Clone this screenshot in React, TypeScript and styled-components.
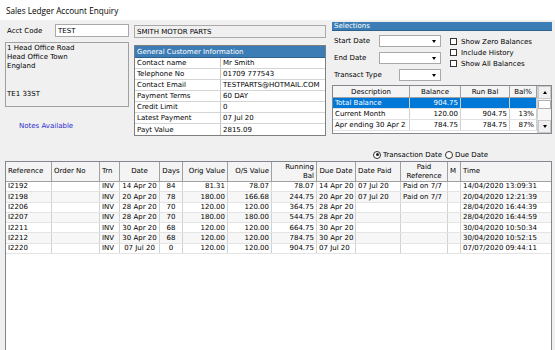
import React from "react";
import styled, { createGlobalStyle } from "styled-components";

const GlobalStyle = createGlobalStyle`
  html, body {
    margin: 0;
    padding: 0;
    overflow: hidden;
    background: #f0f0f0;
  }
  body {
    font-family: Tahoma, "DejaVu Sans", sans-serif;
    font-size: 7px;
    color: #000;
  }
`;

// data
const customerInfo = [
  ["Contact name", "Mr Smith"],
  ["Telephone No", "01709 777543"],
  ["Contact Email", "TESTPARTS@HOTMAIL.COM"],
  ["Payment Terms", "60 DAY"],
  ["Credit Limit", "0"],
  ["Latest Payment", "07 Jul 20"],
  ["Payt Value", "2815.09"],
];

const balances = [
  { desc: "Total Balance", bal: "904.75", run: "", pct: "", selected: true },
  { desc: "Current Month", bal: "120.00", run: "904.75", pct: "13%" },
  { desc: "Apr ending 30 Apr 2", bal: "784.75", run: "784.75", pct: "87%" },
];

type Align = "left" | "center" | "right";

const columns: { title: string; width: number; head: Align; body: Align }[] = [
  { title: "Reference", width: 46, head: "left", body: "left" },
  { title: "Order No", width: 48, head: "left", body: "left" },
  { title: "Trn", width: 20, head: "left", body: "left" },
  { title: "Date", width: 40, head: "center", body: "center" },
  { title: "Days", width: 23, head: "center", body: "center" },
  { title: "Orig Value", width: 45, head: "right", body: "right" },
  { title: "O/S Value", width: 44, head: "right", body: "right" },
  { title: "Running\nBal", width: 45, head: "right", body: "right" },
  { title: "Due Date", width: 39, head: "center", body: "left" },
  { title: "Date Paid", width: 45, head: "left", body: "left" },
  { title: "Paid\nReference", width: 47, head: "center", body: "left" },
  { title: "M", width: 13, head: "left", body: "left" },
  { title: "Time", width: 90, head: "left", body: "left" },
];

const transactions = [
  ["I2192", "", "INV", "14 Apr 20", "84", "81.31", "78.07", "78.07", "14 Apr 20", "07 Jul 20", "Paid on 7/7", "", "14/04/2020 13:09:31"],
  ["I2198", "", "INV", "20 Apr 20", "78", "180.00", "166.68", "244.75", "20 Apr 20", "07 Jul 20", "Paid on 7/7", "", "20/04/2020 12:21:39"],
  ["I2206", "", "INV", "28 Apr 20", "70", "120.00", "120.00", "364.75", "28 Apr 20", "", "", "", "28/04/2020 16:44:39"],
  ["I2207", "", "INV", "28 Apr 20", "70", "180.00", "180.00", "544.75", "28 Apr 20", "", "", "", "28/04/2020 16:44:59"],
  ["I2211", "", "INV", "30 Apr 20", "68", "120.00", "120.00", "664.75", "30 Apr 20", "", "", "", "30/04/2020 10:50:34"],
  ["I2212", "", "INV", "30 Apr 20", "68", "120.00", "120.00", "784.75", "30 Apr 20", "", "", "", "30/04/2020 10:52:15"],
  ["I2220", "", "INV", "07 Jul 20", "0", "120.00", "120.00", "904.75", "07 Jul 20", "", "", "", "07/07/2020 09:44:11"],
];

const gridTemplate = columns.map((c) => `${c.width}px`).join(" ");

// styles
const Window = styled.div`
  width: 555px;
  height: 350px;
  display: flex;
  flex-direction: column;
  background: #f0f0f0;
`;

const TitleBar = styled.div`
  height: 20px;
  flex: none;
  display: flex;
  align-items: center;
  padding-left: 6px;
  background: #fff;
  font-family: "Open Sans", "DejaVu Sans", sans-serif;
  font-size: 8.2px;
`;

const Body = styled.div`
  flex: 1;
  display: flex;
  flex-direction: column;
  padding: 0 3px 0 5px;
  min-height: 0;
`;

const TopArea = styled.div`
  height: 128px;
  flex: none;
  display: flex;
`;

const LeftCol = styled.div`
  width: 124px;
  padding-top: 4px;
  display: flex;
  flex-direction: column;
`;

const MidCol = styled.div`
  width: 192px;
  margin-left: 5px;
  padding-top: 5px;
  display: flex;
  flex-direction: column;
`;

const RightCol = styled.div`
  width: 220px;
  margin-left: 6px;
  padding-top: 2px;
  display: flex;
  flex-direction: column;
`;

const AcctRow = styled.div`
  height: 13px;
  display: flex;
  align-items: center;
`;

const Label = styled.span<{ $w?: number }>`
  width: ${(p) => (p.$w ? `${p.$w}px` : "auto")};
  padding-left: 2px;
  box-sizing: border-box;
  white-space: nowrap;
`;

const TextBox = styled.div<{ $disabled?: boolean }>`
  height: 13px;
  flex: 1;
  box-sizing: border-box;
  border: 1px solid #a9a9a9;
  background: ${(p) => (p.$disabled ? "#f0f0f0" : "#fff")};
  padding-left: 2px;
  display: flex;
  align-items: center;
  white-space: nowrap;
`;

const AddressBox = styled.div`
  margin-top: 5px;
  height: 65px;
  box-sizing: border-box;
  border: 1px solid #a0a0a0;
  background: #f0f0f0;
  padding: 1px 1px;
  line-height: 9.2px;
  white-space: pre;
`;

const Notes = styled.div`
  margin-top: 15px;
  padding-left: 14px;
  line-height: 9px;
  color: #2b2bd0;
`;

const Panel = styled.div`
  margin-top: 7px;
  border: 1px solid #7f7f7f;
  background: #fff;
`;

const PanelHeader = styled.div<{ $h: number }>`
  height: ${(p) => p.$h}px;
  display: flex;
  align-items: center;
  padding-left: 2px;
  background: #3d7db5;
  color: #fff;
  border-bottom: 1px solid #2c6190;
  box-sizing: border-box;
`;

const InfoRow = styled.div`
  height: 11px;
  display: grid;
  grid-template-columns: 85px 1fr;
  border-bottom: 1px solid #d4d4d4;
  box-sizing: border-box;

  &:last-child {
    border-bottom: none;
  }
`;

const InfoCell = styled.div`
  display: flex;
  align-items: center;
  padding-left: 2px;
  white-space: nowrap;
  overflow: hidden;
  & + & {
    border-left: 1px solid #c4c4c4;
  }
`;

const SelectionsBody = styled.div`
  height: 52px;
  display: flex;
`;

const Fields = styled.div`
  width: 109px;
  padding-top: 4px;
  display: flex;
  flex-direction: column;
  gap: 5px;
`;

const FieldRow = styled.div`
  height: 12px;
  display: flex;
  align-items: center;
  justify-content: space-between;
`;

const Dropdown = styled.div<{ $w: number }>`
  width: ${(p) => p.$w}px;
  height: 12px;
  box-sizing: border-box;
  border: 1px solid #a9a9a9;
  background: #fff;
  display: flex;
  align-items: center;
  justify-content: flex-end;
  padding-right: 4px;
`;

const Arrow = styled.span<{ $up?: boolean }>`
  width: 0;
  height: 0;
  border-left: 2px solid transparent;
  border-right: 2px solid transparent;
  ${(p) => (p.$up ? "border-bottom: 3px solid #000;" : "border-top: 3px solid #000;")}
`;

const Checks = styled.div`
  margin-left: 9px;
  padding-top: 5px;
  display: flex;
  flex-direction: column;
`;

const CheckRow = styled.label`
  height: 11px;
  display: flex;
  align-items: center;
  gap: 4px;
  white-space: nowrap;
`;

const CheckBox = styled.span`
  width: 7px;
  height: 7px;
  box-sizing: border-box;
  border: 1px solid #333;
  background: #fff;
`;

const BalanceFrame = styled.div`
  margin-top: 2px;
  height: 49px;
  display: flex;
  border: 1px solid #828790;
  background: #fff;
  box-sizing: border-box;
`;

const BalTable = styled.div`
  flex: 1;
  display: flex;
  flex-direction: column;
`;

const BalRow = styled.div<{ $head?: boolean; $selected?: boolean }>`
  height: ${(p) => (p.$head ? 12 : 11)}px;
  display: grid;
  grid-template-columns: 77px 51px 49px 27px;
  box-sizing: border-box;
  border-bottom: 1px solid ${(p) => (p.$head ? "#a0a0a0" : "#e2e2e2")};
  background: ${(p) => (p.$head ? "#f4f4f4" : p.$selected ? "#0078d7" : "#fff")};
  color: ${(p) => (p.$selected ? "#fff" : "#000")};
`;

const BalCell = styled.div<{ $align: Align; $head?: boolean }>`
  display: flex;
  align-items: center;
  justify-content: ${(p) =>
    p.$align === "right" ? "flex-end" : p.$align === "center" ? "center" : "flex-start"};
  padding: 0 2px;
  white-space: nowrap;
  overflow: hidden;
  border-right: 1px solid ${(p) => (p.$head ? "#a0a0a0" : "#d0d0d0")};
`;

const ScrollBar = styled.div`
  width: 14px;
  display: flex;
  flex-direction: column;
  border-left: 1px solid #d0d0d0;
  background: #f7f7f7;
`;

const ScrollButton = styled.div`
  height: 11px;
  display: flex;
  align-items: center;
  justify-content: center;
  background: #f0f0f0;
  border: 1px solid #c8c8c8;
`;

const ScrollThumb = styled.div`
  height: 7px;
  margin: 1px 0 0;
  background: #fff;
  border: 1px solid #b0b0b0;
`;

const ScrollTrack = styled.div`
  flex: 1;
`;

const RadioRow = styled.div`
  height: 13px;
  flex: none;
  display: flex;
  align-items: center;
  gap: 3px;
  padding-left: 368px;
`;

const RadioItem = styled.label`
  display: flex;
  align-items: center;
  gap: 2px;
  white-space: nowrap;
`;

const RadioCircle = styled.span<{ $checked?: boolean }>`
  width: 8px;
  height: 8px;
  box-sizing: border-box;
  border: 1px solid #333;
  border-radius: 50%;
  background: #fff;
  display: flex;
  align-items: center;
  justify-content: center;

  &::after {
    content: "";
    width: 3px;
    height: 3px;
    border-radius: 50%;
    background: ${(p) => (p.$checked ? "#222" : "transparent")};
  }
`;

const GridFrame = styled.div`
  width: 547px;
  height: 200px;
  flex: none;
  box-sizing: border-box;
  border: 1px solid #828790;
  background: #fff;
`;

const GridRow = styled.div<{ $head?: boolean; $alt?: boolean }>`
  height: ${(p) => (p.$head ? "20px" : "10.3px")};
  display: grid;
  grid-template-columns: ${gridTemplate};
  box-sizing: border-box;
  border-bottom: 1px solid ${(p) => (p.$head ? "#a0a0a0" : "#e4e4e4")};
  background: ${(p) => (p.$head ? "#f4f4f4" : p.$alt ? "#f7f7f7" : "#fff")};
`;

const GridCell = styled.div<{ $align: Align; $head?: boolean }>`
  display: flex;
  align-items: center;
  justify-content: ${(p) =>
    p.$align === "right" ? "flex-end" : p.$align === "center" ? "center" : "flex-start"};
  text-align: ${(p) => p.$align};
  padding: 0 2px;
  white-space: pre;
  overflow: hidden;
  line-height: 8.5px;
  border-right: 1px solid ${(p) => (p.$head ? "#a0a0a0" : "#d2d2d2")};

  &:last-child {
    border-right: none;
  }
`;

// markup
const App = () => {
  return (
    <>
      <GlobalStyle />
      <Window>
        <TitleBar>Sales Ledger Account Enquiry</TitleBar>
        <Body>
          <TopArea>
            <LeftCol>
              <AcctRow>
                <Label $w={50}>Acct Code</Label>
                <TextBox>TEST</TextBox>
              </AcctRow>
              <AddressBox>
                {"1 Head Office Road\nHead Office Town\nEngland\n\n\nTE1 33ST"}
              </AddressBox>
              <Notes>Notes Available</Notes>
            </LeftCol>

            <MidCol>
              <AcctRow>
                <TextBox $disabled>SMITH MOTOR PARTS</TextBox>
              </AcctRow>
              <Panel>
                <PanelHeader $h={12}>General Customer Information</PanelHeader>
                {customerInfo.map(([k, v]) => (
                  <InfoRow key={k}>
                    <InfoCell>{k}</InfoCell>
                    <InfoCell>{v}</InfoCell>
                  </InfoRow>
                ))}
              </Panel>
            </MidCol>

            <RightCol>
              <PanelHeader $h={9}>Selections</PanelHeader>
              <SelectionsBody>
                <Fields>
                  <FieldRow>
                    <Label>Start Date</Label>
                    <Dropdown $w={62}>
                      <Arrow />
                    </Dropdown>
                  </FieldRow>
                  <FieldRow>
                    <Label>End Date</Label>
                    <Dropdown $w={62}>
                      <Arrow />
                    </Dropdown>
                  </FieldRow>
                  <FieldRow>
                    <Label>Transact Type</Label>
                    <Dropdown $w={42}>
                      <Arrow />
                    </Dropdown>
                  </FieldRow>
                </Fields>
                <Checks>
                  <CheckRow>
                    <CheckBox />
                    Show Zero Balances
                  </CheckRow>
                  <CheckRow>
                    <CheckBox />
                    Include History
                  </CheckRow>
                  <CheckRow>
                    <CheckBox />
                    Show All Balances
                  </CheckRow>
                </Checks>
              </SelectionsBody>

              <BalanceFrame>
                <BalTable>
                  <BalRow $head>
                    <BalCell $head $align="center">Description</BalCell>
                    <BalCell $head $align="center">Balance</BalCell>
                    <BalCell $head $align="center">Run Bal</BalCell>
                    <BalCell $head $align="center">Bal%</BalCell>
                  </BalRow>
                  {balances.map((b) => (
                    <BalRow key={b.desc} $selected={b.selected}>
                      <BalCell $align="left">{b.desc}</BalCell>
                      <BalCell $align="right">{b.bal}</BalCell>
                      <BalCell $align="right">{b.run}</BalCell>
                      <BalCell $align="right">{b.pct}</BalCell>
                    </BalRow>
                  ))}
                </BalTable>
                <ScrollBar>
                  <ScrollButton>
                    <Arrow $up />
                  </ScrollButton>
                  <ScrollThumb />
                  <ScrollTrack />
                  <ScrollButton>
                    <Arrow />
                  </ScrollButton>
                </ScrollBar>
              </BalanceFrame>
            </RightCol>
          </TopArea>

          <RadioRow>
            <RadioItem>
              <RadioCircle $checked />
              Transaction Date
            </RadioItem>
            <RadioItem>
              <RadioCircle />
              Due Date
            </RadioItem>
          </RadioRow>

          <GridFrame>
            <GridRow $head>
              {columns.map((c) => (
                <GridCell key={c.title} $head $align={c.head}>
                  {c.title}
                </GridCell>
              ))}
            </GridRow>
            {transactions.map((row, i) => (
              <GridRow key={row[0]} $alt={i % 2 === 1}>
                {row.map((v, j) => (
                  <GridCell key={j} $align={columns[j].body}>
                    {v}
                  </GridCell>
                ))}
              </GridRow>
            ))}
          </GridFrame>
        </Body>
      </Window>
    </>
  );
};

export default App;
